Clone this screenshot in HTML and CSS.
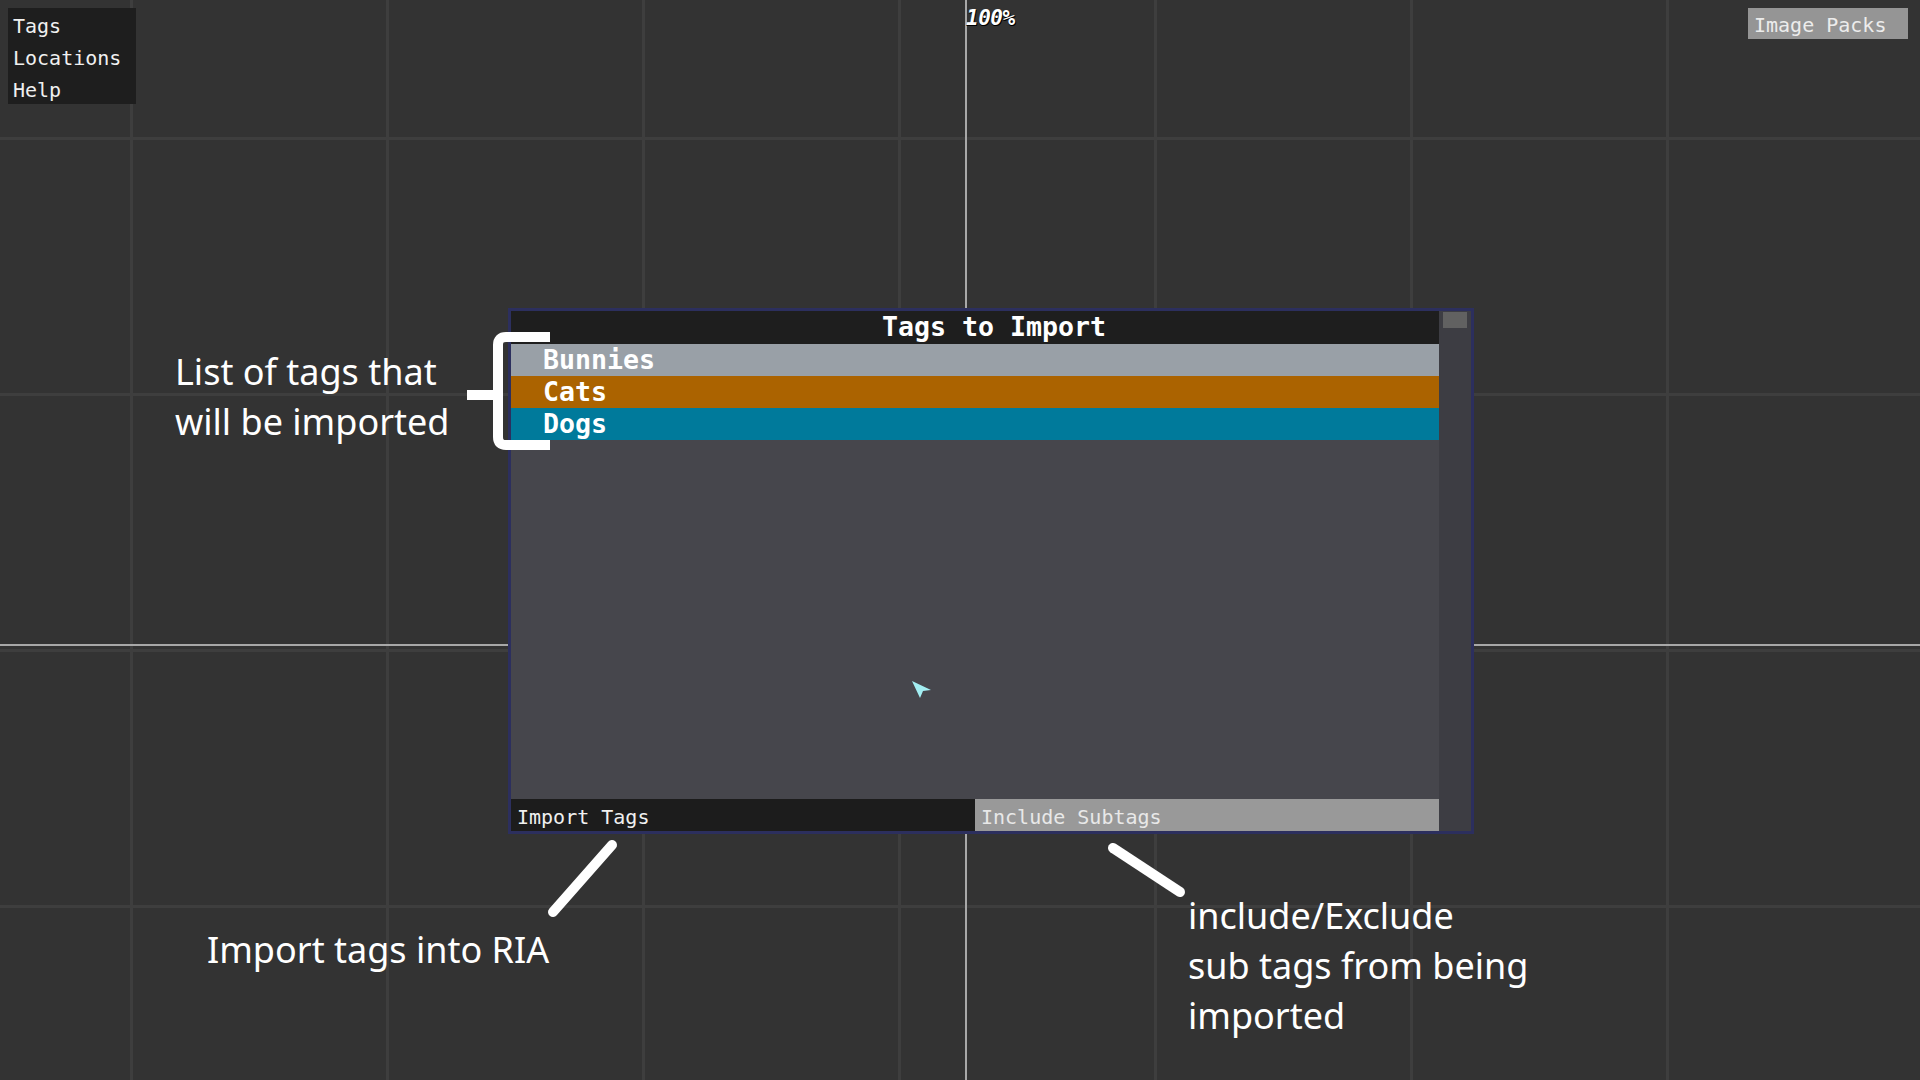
FILE: index.html
```html
<!DOCTYPE html>
<html>
<head>
<meta charset="utf-8">
<title>Tags to Import</title>
<link rel="stylesheet" href="styles.css">
</head>
<body>
<div class="canvas">
  <header class="topbar">
    <nav class="menu">
      <div class="menu-item">Tags</div>
      <div class="menu-item">Locations</div>
      <div class="menu-item">Help</div>
    </nav>
    <div class="zoom">100%</div>
    <div class="packs">Image Packs</div>
  </header>

  <section class="dialog">
    <div class="dialog-main">
      <div class="dialog-title">Tags to Import</div>
      <div class="tag-row tag-bunnies">Bunnies</div>
      <div class="tag-row tag-cats">Cats</div>
      <div class="tag-row tag-dogs">Dogs</div>
      <div class="list-fill"></div>
      <div class="dialog-footer">
        <div class="btn btn-import">Import Tags</div>
        <div class="btn btn-subtags">Include Subtags</div>
      </div>
    </div>
    <div class="scrollbar"><div class="thumb"></div></div>
  </section>

  <div class="note note-list">List of tags that<br>will be imported</div>
  <div class="note note-import">Import tags into RIA</div>
  <div class="note note-subtags">include/Exclude<br>sub tags from being<br>imported</div>

  <svg class="overlay" width="1920" height="1080" viewBox="0 0 1920 1080">
    <path d="M550 337 H506 Q498 337 498 345 V437 Q498 445 506 445 H550" fill="none" stroke="#ffffff" stroke-width="10"/>
    <rect x="467" y="390" width="28" height="10" fill="#ffffff"/>
    <line x1="553" y1="912" x2="612" y2="845" stroke="#ffffff" stroke-width="10" stroke-linecap="round"/>
    <line x1="1113" y1="848" x2="1180" y2="892" stroke="#ffffff" stroke-width="10" stroke-linecap="round"/>
    <polygon points="912,681 931,690 923,691 920,698" fill="#a3eef2"/>
  </svg>
</div>
</body>
</html>
```

FILE: styles.css
```css
html, body {
  margin: 0;
  padding: 0;
}

body {
  width: 1920px;
  height: 1080px;
  overflow: hidden;
  background-color: #333333;
  font-family: "DejaVu Sans Mono", "Liberation Mono", monospace;
}

.canvas {
  position: relative;
  width: 1920px;
  height: 1080px;
  background-image:
    linear-gradient(to right, transparent 965px, #a8a8a8 965px, #a8a8a8 967px, transparent 967px),
    linear-gradient(to bottom, transparent 644px, #a8a8a8 644px, #a8a8a8 646px, transparent 646px),
    linear-gradient(to right, #3e3e3e 3px, transparent 3px),
    linear-gradient(to bottom, #3e3e3e 3px, transparent 3px);
  background-size: 1920px 1080px, 1920px 1080px, 256px 256px, 256px 256px;
  background-position: 0 0, 0 0, 130px 0, 0 137px;
  background-repeat: no-repeat, no-repeat, repeat, repeat;
}

/* ---------- top bar ---------- */
.topbar {
  display: grid;
  grid-template-columns: 958px 1fr auto;
  align-items: start;
  padding: 8px 12px 0 8px;
}

.menu {
  width: 128px;
  background: #1e1e1e;
  color: #f0f0f0;
}

.menu-item {
  height: 32px;
  line-height: 36px;
  font-size: 20px;
  padding-left: 5px;
}

.zoom {
  color: #ffffff;
  font-size: 21px;
  font-style: italic;
  font-weight: bold;
  line-height: 20px;
  letter-spacing: -0.5px;
  text-shadow: 1px 1px 0 #000, 0 1px 0 #000;
}

.packs {
  width: 154px;
  height: 31px;
  line-height: 35px;
  padding-left: 6px;
  background: #959595;
  color: #ececec;
  font-size: 20px;
  overflow: hidden;
}

/* ---------- dialog window ---------- */
.dialog {
  position: absolute;
  left: 508px;
  top: 308px;
  width: 960px;
  height: 520px;
  border: 3px solid #2c2f5e;
  display: flex;
}

.dialog-main {
  width: 928px;
  display: flex;
  flex-direction: column;
}

.dialog-title {
  height: 33px;
  line-height: 31px;
  background: #1e1e1e;
  color: #ffffff;
  font-weight: bold;
  font-size: 26.6px;
  text-align: center;
  padding-left: 38px;
}

.tag-row {
  height: 32px;
  line-height: 31px;
  padding-left: 32px;
  color: #ffffff;
  font-weight: bold;
  font-size: 26.6px;
}

.tag-bunnies { background: #99a0a7; }
.tag-cats { background: #ab6300; }
.tag-dogs { background: #007a9b; }

.list-fill {
  flex: 1;
  background: #46464c;
}

.dialog-footer {
  height: 32px;
  display: flex;
}

.btn {
  flex: 1;
  line-height: 36px;
  padding-left: 6px;
  font-size: 20px;
  overflow: hidden;
}

.btn-import {
  background: #1c1c1c;
  color: #f0f0f0;
}

.btn-subtags {
  background: #999999;
  color: #e8e8e8;
}

.scrollbar {
  width: 32px;
  background: #3d3d43;
  padding: 1px 4px 0 4px;
  box-sizing: border-box;
}

.thumb {
  height: 16px;
  background: #616161;
}

/* ---------- annotations ---------- */
.note {
  position: absolute;
  color: #ffffff;
  font-family: "Noto Sans", "Open Sans", sans-serif;
  font-size: 36px;
  line-height: 50px;
  white-space: nowrap;
}

.note-list { left: 175px; top: 347px; }
.note-import { left: 207px; top: 925px; }
.note-subtags { left: 1188px; top: 891px; }

.overlay {
  position: absolute;
  left: 0;
  top: 0;
  pointer-events: none;
}
```
